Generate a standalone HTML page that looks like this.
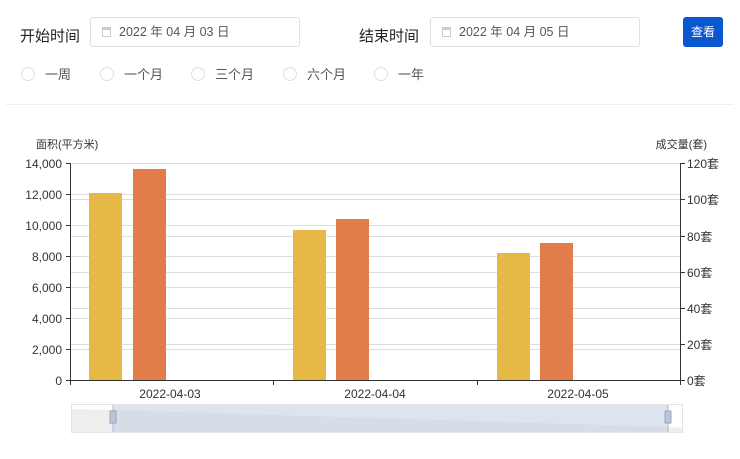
<!DOCTYPE html>
<html><head><meta charset="utf-8"><style>
body{margin:0;width:740px;height:459px;background:#fff;font-family:"Liberation Sans","Noto Sans CJK SC",sans-serif;position:relative;overflow:hidden}
.lab{position:absolute;font-size:15px;color:#222}
.inp{position:absolute;height:30px;border:1px solid #dcdfe6;border-radius:3px;box-sizing:border-box;font-size:12.5px;color:#555;line-height:28px;padding-left:28px}
.inp:before{content:"";position:absolute;left:11px;top:9px;width:9px;height:10px;border:1px solid #c8ccd3;border-top-width:3px;box-sizing:border-box}
.btn{position:absolute;left:683px;top:17px;width:40px;height:30px;background:#0b57d0;border-radius:3px;color:#fff;font-size:12px;line-height:30px;text-align:center}
.r{position:absolute;top:64px;font-size:13px;color:#555}
.r:before{content:"";display:inline-block;width:12px;height:12px;border:1px solid #dcdfe6;border-radius:50%;vertical-align:-2px;margin-right:10px}
</style></head><body>
<div class="lab" style="left:20px;top:25px">开始时间</div>
<div class="inp" style="left:90px;top:17px;width:210px">2022 年 04 月 03 日</div>
<div class="lab" style="left:359px;top:25px">结束时间</div>
<div class="inp" style="left:430px;top:17px;width:210px">2022 年 04 月 05 日</div>
<div class="btn">查看</div>
<div class="r" style="left:21px">一周</div>
<div class="r" style="left:100px">一个月</div>
<div class="r" style="left:191px">三个月</div>
<div class="r" style="left:283px">六个月</div>
<div class="r" style="left:374px">一年</div>
<div style="position:absolute;left:6px;right:6px;top:104px;height:1px;background:#eee"></div>
<svg width="740" height="459" style="position:absolute;left:0;top:0" font-family="Liberation Sans,Noto Sans CJK SC,sans-serif" font-size="12" fill="#333">
<g stroke="#ddd" stroke-width="1">
<line x1="70" x2="681" y1="163.5" y2="163.5"/><line x1="70" x2="681" y1="194.5" y2="194.5"/><line x1="70" x2="681" y1="225.5" y2="225.5"/><line x1="70" x2="681" y1="256.5" y2="256.5"/><line x1="70" x2="681" y1="287.5" y2="287.5"/><line x1="70" x2="681" y1="318.5" y2="318.5"/><line x1="70" x2="681" y1="349.5" y2="349.5"/>
<line x1="70" x2="681" y1="199.5" y2="199.5"/><line x1="70" x2="681" y1="236.5" y2="236.5"/><line x1="70" x2="681" y1="272.5" y2="272.5"/><line x1="70" x2="681" y1="308.5" y2="308.5"/><line x1="70" x2="681" y1="344.5" y2="344.5"/>
</g>
<rect x="89" y="193" width="33" height="187" fill="#e6b845"/><rect x="133" y="169" width="33" height="211" fill="#e27c4a"/>
<rect x="293" y="230" width="33" height="150" fill="#e6b845"/><rect x="336" y="219" width="33" height="161" fill="#e27c4a"/>
<rect x="497" y="253" width="33" height="127" fill="#e6b845"/><rect x="540" y="243" width="33" height="137" fill="#e27c4a"/>
<g stroke="#333"><line x1="70.5" x2="70.5" y1="163" y2="381"/><line x1="680.5" x2="680.5" y1="163" y2="381"/><line x1="66" x2="685" y1="380.5" y2="380.5"/>
<line x1="273.5" x2="273.5" y1="380" y2="385"/><line x1="477.5" x2="477.5" y1="380" y2="385"/><line x1="70.5" x2="70.5" y1="380" y2="385"/><line x1="680.5" x2="680.5" y1="380" y2="385"/>
<g><line x1="66" x2="70" y1="163.5" y2="163.5"/><line x1="66" x2="70" y1="194.5" y2="194.5"/><line x1="66" x2="70" y1="225.5" y2="225.5"/><line x1="66" x2="70" y1="256.5" y2="256.5"/><line x1="66" x2="70" y1="287.5" y2="287.5"/><line x1="66" x2="70" y1="318.5" y2="318.5"/><line x1="66" x2="70" y1="349.5" y2="349.5"/>
<line x1="680" x2="685" y1="163.5" y2="163.5"/><line x1="680" x2="685" y1="199.5" y2="199.5"/><line x1="680" x2="685" y1="236.5" y2="236.5"/><line x1="680" x2="685" y1="272.5" y2="272.5"/><line x1="680" x2="685" y1="308.5" y2="308.5"/><line x1="680" x2="685" y1="344.5" y2="344.5"/></g></g>
<text x="36" y="148" font-size="11">面积(平方米)</text>
<text x="707" y="148" font-size="11" text-anchor="end">成交量(套)</text>
<g text-anchor="end"><text x="62" y="168">14,000</text><text x="62" y="199">12,000</text><text x="62" y="230">10,000</text><text x="62" y="261">8,000</text><text x="62" y="292">6,000</text><text x="62" y="323">4,000</text><text x="62" y="354">2,000</text><text x="62" y="385">0</text></g>
<g><text x="687" y="168">120套</text><text x="687" y="204">100套</text><text x="687" y="241">80套</text><text x="687" y="277">60套</text><text x="687" y="313">40套</text><text x="687" y="349">20套</text><text x="687" y="385">0套</text></g>
<g text-anchor="middle"><text x="170" y="398">2022-04-03</text><text x="375" y="398">2022-04-04</text><text x="578" y="398">2022-04-05</text></g>
<rect x="71.5" y="404.5" width="611" height="28" fill="#fff" stroke="#e4e4e4"/>
<polygon points="72,409 113,410 668,427 682,428 682,432 72,432" fill="#eee"/>
<rect x="113" y="405" width="555" height="27" fill="#c6d2e2" opacity="0.6"/>
<g stroke="#a8b8d0"><line x1="113" x2="113" y1="405" y2="432"/><line x1="668" x2="668" y1="405" y2="432"/></g>
<rect x="110" y="411" width="6" height="12" fill="#b8c6da" stroke="#94a6c0"/><rect x="665" y="411" width="6" height="12" fill="#b8c6da" stroke="#94a6c0"/>
</svg>
</body></html>
